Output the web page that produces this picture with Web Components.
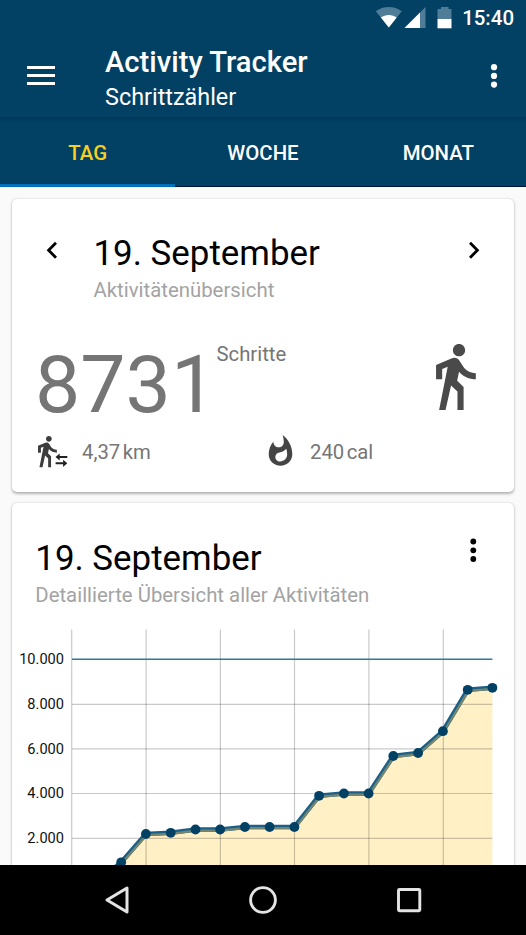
<!DOCTYPE html>
<html lang="de">
<head>
<meta charset="utf-8">
<title>Activity Tracker</title>
<style>
html,body{margin:0;height:100%}
body{font-family:Roboto,"Liberation Sans",sans-serif;background:#000;overflow:hidden}
</style>
</head>
<body>
<tracker-app></tracker-app>
<script>
const define = (name, html, setup) => {
  const t = document.createElement('template');
  t.innerHTML = '<style>*{box-sizing:border-box}svg{display:block;flex:none;overflow:visible}</style>' + html;
  customElements.define(name, class extends HTMLElement {
    constructor() {
      super();
      this.attachShadow({mode: 'open'}).append(t.content.cloneNode(true));
    }
    connectedCallback() { if (setup) setup(this, this.shadowRoot); }
  });
};
const WALK = 'M13.5 5.5c1.1 0 2-.9 2-2s-.9-2-2-2-2 .9-2 2 .9 2 2 2zM9.8 8.9L7 23h2.1l1.8-8 2.1 2v6h2v-7.5l-2.1-2 .6-3C14.8 12 16.8 13 19 13v-2c-1.9 0-3.5-1-4.3-2.4l-1-1.6c-.4-.6-1-1-1.7-1-.3 0-.5.1-.8.1L6 8.3V13h2V9.6l1.8-.7';

define('status-bar', `<style>
:host{display:flex;justify-content:flex-end;align-items:flex-start;height:35px;padding-right:12px;color:#fff}
span{font-weight:500;font-size:20.45px;line-height:24px;margin:6px 0 0 10px}
</style>
<svg width="77" height="35" viewBox="375.500 0 77 35">
<path d="M389.3 27.6L376.3 11.3C380 8.5 384.5 7 389.3 7s9.3 1.5 13 4.3z" fill="#4f7c96"/>
<path d="M389.3 27.6L381.4 17.6C383.6 15.9 386.3 15 389.3 15s5.700 .9 7.900 2.600z" fill="#fff"/>
<path d="M426 7v21h-21z" fill="#4f7c96"/><path d="M420.500 12.500v15.500h-15.500z" fill="#fff"/>
<path d="M438 9h3.500v-2h7.500v2h3v10.500h-14z" fill="#4f7c96"/><path d="M438 19h14v9.300h-14z" fill="#fff"/>
</svg><span>15:40</span>`);

define('app-toolbar', `<style>
:host{display:flex;height:82px;color:#fff;padding:0 28px 0 27px;align-items:flex-start}
.m{margin-top:31px}.d{margin-top:29px}
.t{flex:1;margin-left:50px;padding-top:9px}
.a{font-weight:500;font-size:29.2px;line-height:37px}
.b{font-size:23.4px;line-height:33px}
</style>
<svg class="m" width="28" height="19" viewBox="0 0 28 19" fill="#fff"><path d="M0 0h28v3H0zM0 8h28v3H0zM0 16h28v3H0z"/></svg>
<div class="t"><div class="a"><slot name="title"></slot></div><div class="b"><slot name="subtitle"></slot></div></div>
<svg class="d" width="8" height="24" viewBox="0 0 8 24" fill="#fff"><circle cx="4" cy="3.200" r="3.100"/><circle cx="4" cy="11.900" r="3.100"/><circle cx="4" cy="20.600" r="3.100"/></svg>`);

define('tab-item', `<style>
:host{display:block;flex:1;text-align:center;color:#fff;font-weight:500;font-size:20.4px;line-height:24px;padding-top:24px;border-bottom:1px solid #00103f}
:host([active]){color:#fbcf1d;border-bottom:3px solid #0271b9}
</style><slot></slot>`);

define('tab-bar', `<style>
:host{display:flex;height:70px;background:linear-gradient(#003957,#024164 6px)}
</style><slot></slot>`);

define('app-card', `<style>
:host{display:block;background:#fff;border-radius:5px;box-shadow:0 1.500px 3px rgba(0,0,0,.28),0 0 2px rgba(0,0,0,.1)}
</style><slot></slot>`);

define('card-heading', `<style>
:host{display:block}
.a{font-size:34.900px;line-height:42px;color:#000}
.b{font-size:20.360px;line-height:26px;color:#a3a3a3;margin-top:2px}
</style><div class="a"><slot></slot></div><div class="b"><slot name="sub"></slot></div>`);

define('activity-summary', `<style>
:host{display:block;height:293px;padding:34px 35px 0 24px;color:#757575}
.h{display:flex;height:104px}
.h svg{margin-top:9px}.l{margin-left:11px}.h card-heading{margin-left:36.500px;flex:1}
.s{display:flex;height:95px}
.n{font-size:80.600px;line-height:96px;height:90px;width:180px;margin-left:-1px}
.u{font-size:20.300px;line-height:24px;margin:5px 0 0 1.500px;flex:1}
.r{display:grid;grid-template-columns:227px 1fr;height:36px;align-items:start}
.c{display:flex;font-size:20.300px;line-height:24px}
.c span{margin-top:8px}.c i{font-style:normal;margin-left:2.500px}
</style>
<div class="h"><svg class="l" width="10" height="17" viewBox="0 .500 10 17" fill="none" stroke="#000" stroke-width="2.800"><path d="M9 1.200L1.600 8.700 9 16.200"/></svg>
<card-heading>19. September<span slot="sub">Aktivitätenübersicht</span></card-heading>
<svg class="l" width="10" height="17" viewBox="0 .500 10 17" fill="none" stroke="#000" stroke-width="2.800"><path d="M1 1.200L8.400 8.700 1 16.200"/></svg></div>
<div class="s"><div class="n">8731</div><div class="u">Schritte</div>
<svg width="61" height="74" viewBox="418 337 61 74" fill="#4a4a4a"><path transform="translate(417.700 339.500) scale(3.060)" d="${WALK}"/></svg></div>
<div class="r"><div class="c"><svg width="46" height="36" viewBox="36 432 46 36"><path fill="#3d3d3d" transform="translate(29.300 433.800) scale(1.450)" d="${WALK}"/><path fill="#222" d="M55.500 457l4.200-3.600v2.600h7.600v2h-7.600v2.600zM67.300 463.300l-4.200 3.600v-2.600h-7.500v-2h7.500v-2.600z"/></svg><span>4,37<i>km</i></span></div>
<div class="c"><svg width="47" height="36" viewBox="263 432 47 36" fill="#454545"><path transform="translate(262.800 434.100) scale(1.475 1.440)" d="M13.500.67s.74 2.650.74 4.800c0 2.060-1.350 3.730-3.410 3.730-2.070 0-3.630-1.670-3.630-3.730l.03-.36C5.210 7.510 4 10.620 4 14c0 4.420 3.580 8 8 8s8-3.580 8-8C20 8.610 17.410 3.800 13.500.67zM11.710 19c-1.780 0-3.220-1.400-3.220-3.140 0-1.620 1.050-2.760 2.810-3.120 1.770-.36 3.600-1.210 4.620-2.580.39 1.290.59 2.650.59 4.040 0 2.650-2.150 4.800-4.800 4.800z"/></svg><span>240<i>cal</i></span></div></div>`);

define('steps-chart', `<style>
:host{display:block}
text{font:14.600px Roboto,"Liberation Sans",sans-serif;fill:#111;text-anchor:end}
</style><svg width="502" height="264" viewBox="12 620 502 264"></svg>`, (el, root) => {
  const pts = [[96.5,883],[121.2,862.3],[145.9,834],[170.7,832.8],[195.5,829.5],[220.1,829.5],[244.9,827],[269.6,827],[294.4,827],[319.1,795.8],[343.9,793.5],[368.6,793.5],[393.3,756],[418.1,753],[442.9,731.2],[467.7,689.8],[492.4,687.8]];
  const line = 'M' + pts.map(p => p.join(' ')).join('L');
  const area = line + 'V884H96Z';
  const xs = [71.700,146.100,220.400,294.500,368.900,443.300];
  const rows = [[8000,704.400],[6000,748.900],[4000,793.500],[2000,838.300]];
  const labels = [[10000,659.200], ...rows];
  root.querySelector('svg').innerHTML =
    `<defs><clipPath id="under"><path d="${area}"/></clipPath></defs>
    <path d="${area}" fill="#fff0c5"/>
    <g stroke="#000" stroke-opacity=".21" stroke-width="1.200">${xs.map(x => `<path d="M${x} 629.500V884"/>`).join('')}${rows.map(r => `<path d="M72 ${r[1]}H492.400"/>`).join('')}</g>
    <path d="M72 659.300H492.400" stroke="#2e78a2" stroke-width="1.500"/>
    <path d="${line}" fill="none" stroke="#1c5f87" stroke-width="4.600"/>
    <path d="${line}" fill="none" stroke="#738570" stroke-width="4.600" clip-path="url(#under)"/>
    ${pts.map(p => `<circle cx="${p[0]}" cy="${p[1]}" r="4.900" fill="#024164"/>`).join('')}
    ${labels.map(l => `<text x="64" y="${l[1] + 4.800}">${l[0].toLocaleString('de-DE').replace(/^(\d)(\d{3})$/, '$1.$2')}</text>`).join('')}`;
});

define('activity-detail', `<style>
:host{display:block;height:400px;overflow:hidden}
.h{display:flex;height:117px;padding:35px 37px 0 23.300px}
.h card-heading{flex:1}
</style>
<div class="h"><card-heading>19. September<span slot="sub">Detaillierte Übersicht aller Aktivitäten</span></card-heading>
<svg width="8" height="24" viewBox="-.3 0 8 24" fill="#000"><circle cx="4" cy="3.500" r="2.900"/><circle cx="4" cy="12.300" r="2.900"/><circle cx="4" cy="21" r="2.900"/></svg></div>
<steps-chart></steps-chart>`);

define('system-nav', `<style>
:host{display:grid;grid-template-columns:146px 146px 146px;justify-content:center;height:70px;background:#000;align-items:center;justify-items:center;position:relative}
</style>
<svg width="28" height="28" viewBox="103 886 28 28" fill="none" stroke="#e4e4e4" stroke-width="3" stroke-linejoin="round"><path d="M107 900L127 888v24z"/></svg>
<svg width="28" height="28" viewBox="249 886 28 28" fill="none" stroke="#e4e4e4" stroke-width="2.900"><circle cx="263" cy="900" r="12.400"/></svg>
<svg width="28" height="28" viewBox="395 886 28 28" fill="none" stroke="#e4e4e4" stroke-width="2.900"><rect x="398.500" y="889.500" width="21.300" height="21.300" rx="1"/></svg>`);

define('tracker-app', `<style>
:host{display:flex;flex-direction:column;width:526px;height:935px;overflow:hidden}
header{background:#024164;height:117px;flex:none}
tab-bar,system-nav{flex:none}
main{flex:1;min-height:0;background:#fafafa;padding:12px 12px 0;overflow:hidden;display:flex;flex-direction:column;gap:11px}
app-card{flex:none}
</style>
<header><status-bar></status-bar><app-toolbar><span slot="title">Activity Tracker</span><span slot="subtitle">Schrittzähler</span></app-toolbar></header>
<tab-bar><tab-item active>TAG</tab-item><tab-item>WOCHE</tab-item><tab-item>MONAT</tab-item></tab-bar>
<main><app-card><activity-summary></activity-summary></app-card><app-card><activity-detail></activity-detail></app-card></main>
<system-nav></system-nav>`);
</script>
</body>
</html>
